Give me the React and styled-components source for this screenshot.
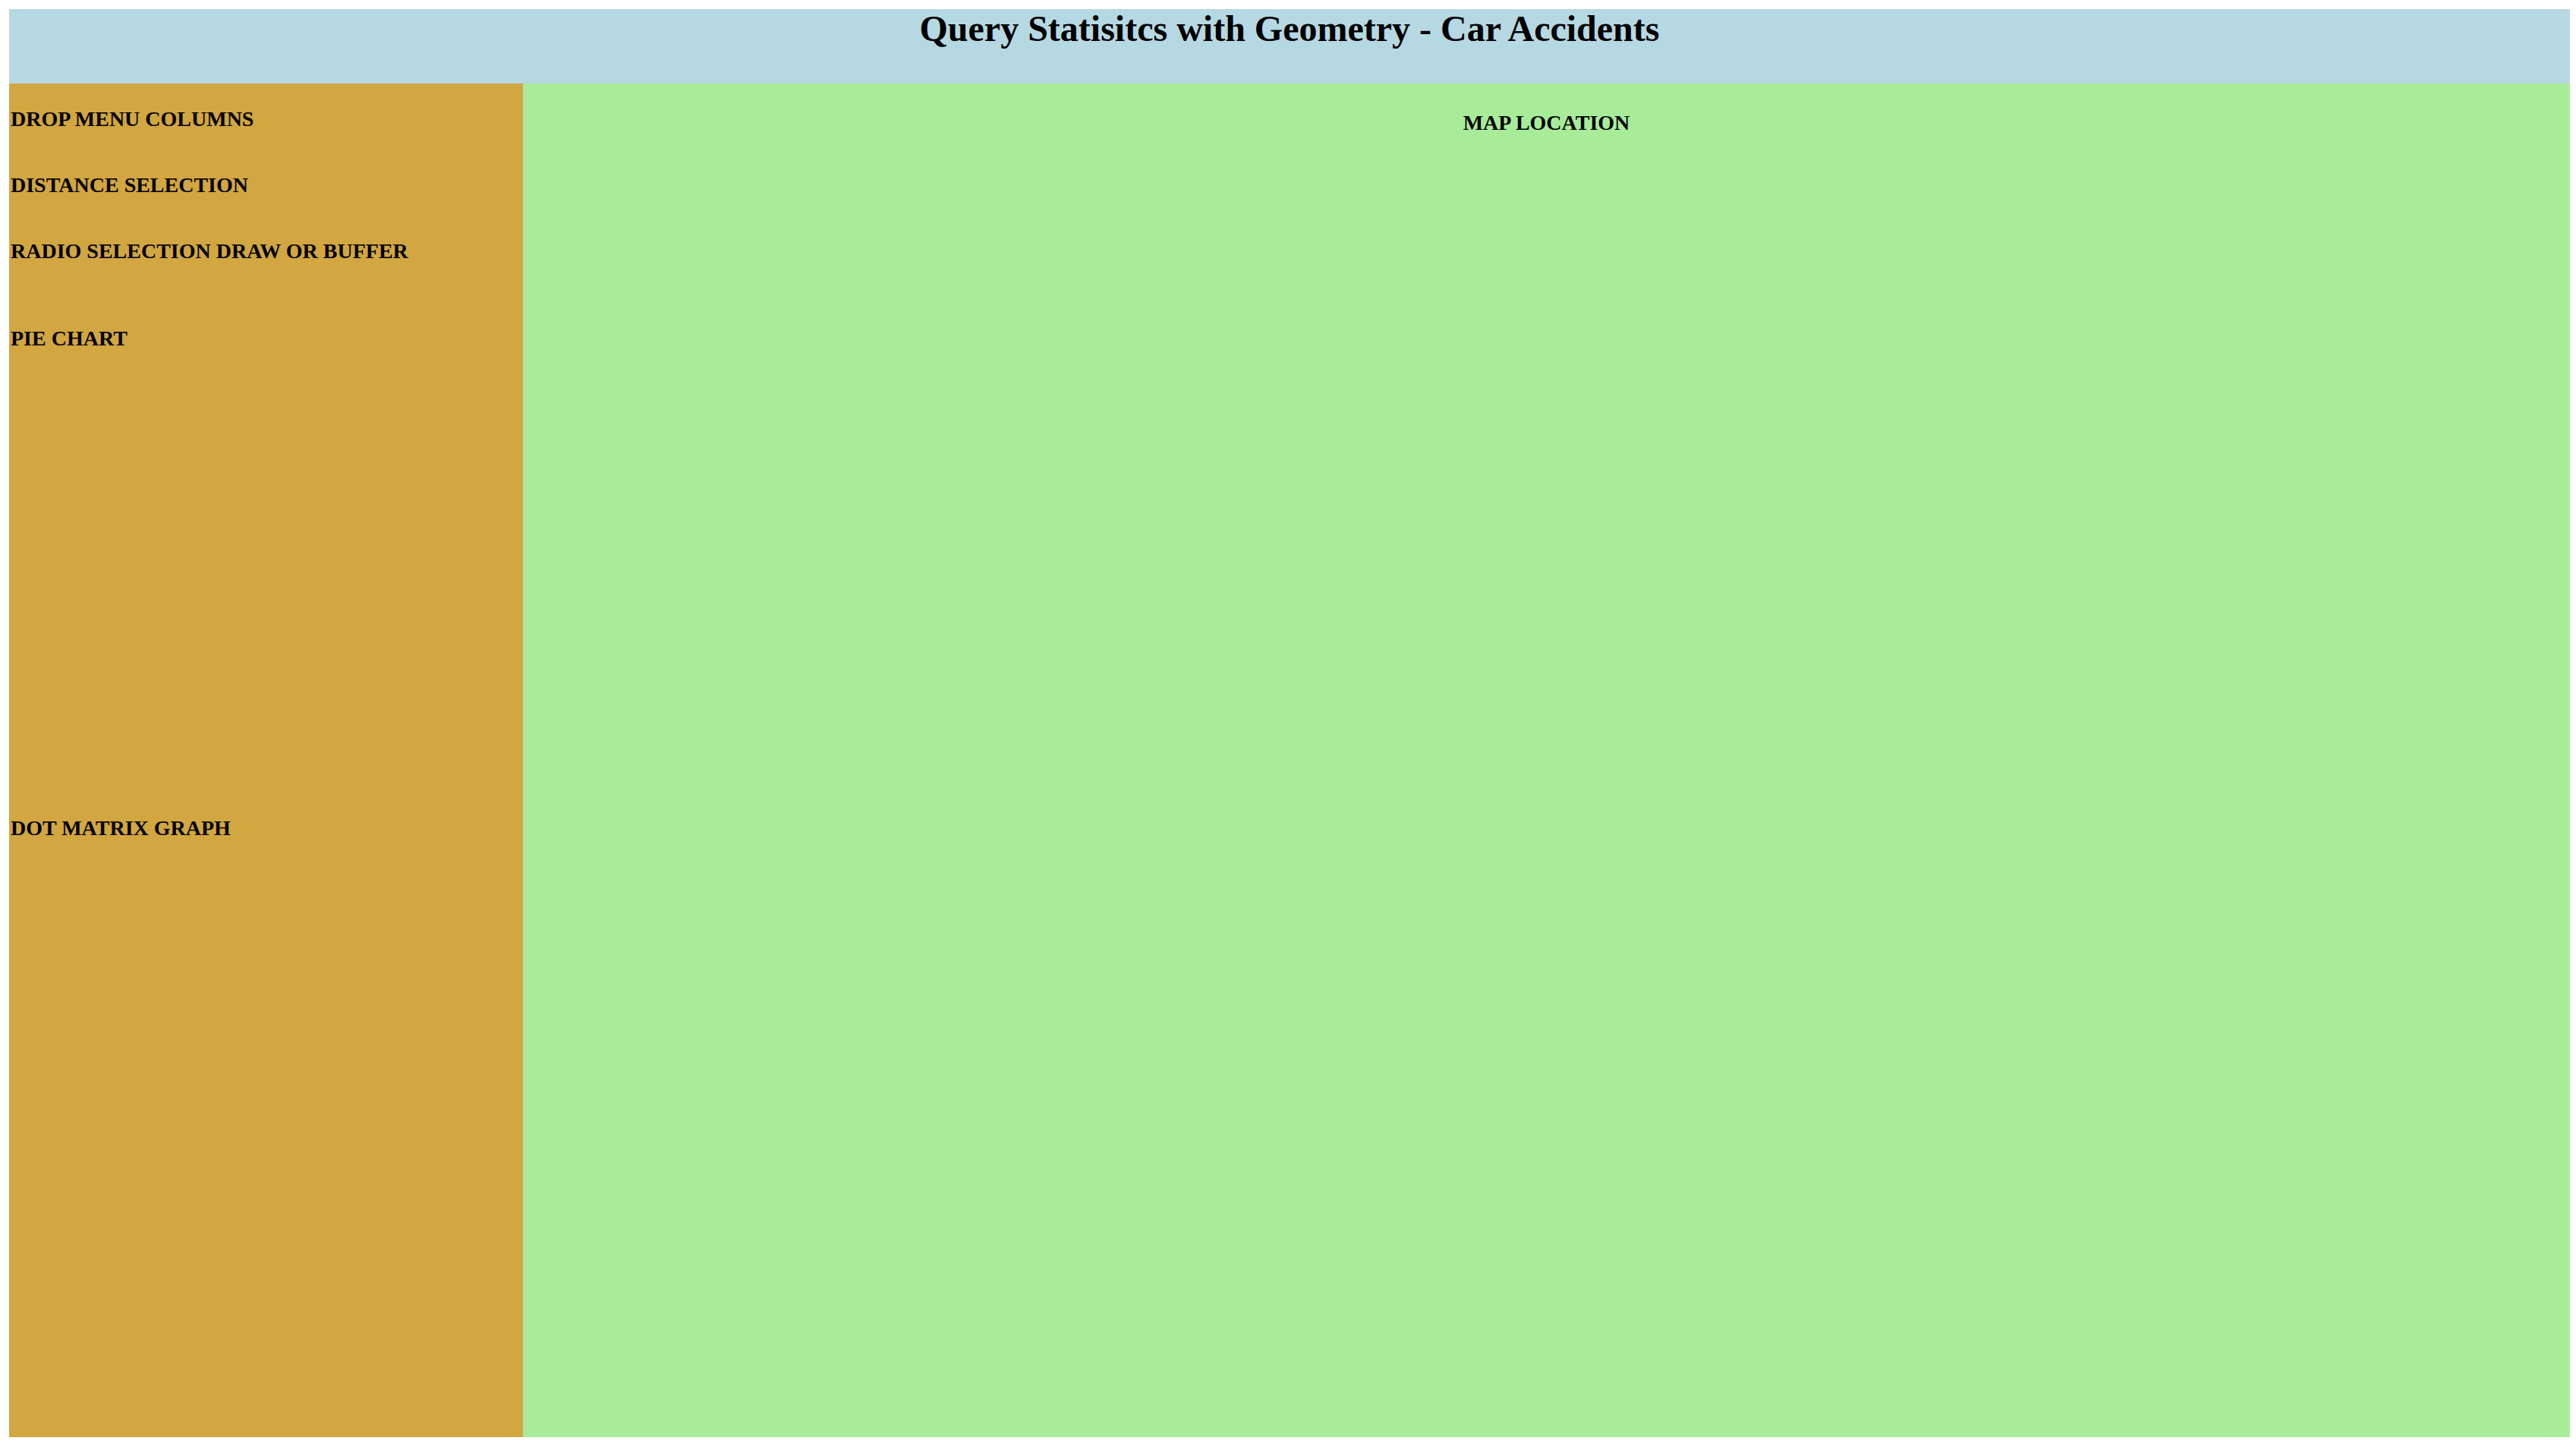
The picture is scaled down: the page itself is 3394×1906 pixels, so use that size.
import React from 'react';
import styled, { createGlobalStyle } from 'styled-components';

const GlobalStyle = createGlobalStyle`
  html, body {
    margin: 0;
    padding: 0;
    background: #ffffff;
  }
  body {
    font-family: "Liberation Serif", "Times New Roman", serif;
    color: #000;
  }
`

const Page = styled.div`
  box-sizing: border-box;
  height: 1906px;
  padding: 12px 8px 13px 12px;
  display: grid;
  grid-template-rows: 98px 1fr;
  grid-template-columns: 677px 1fr;
`

const Header = styled.header`
  grid-column: 1 / span 2;
  background: #b6d8e3;
  padding-top: 1px;
  text-align: center;
  h1 {
    margin: 0;
    font-size: 48px;
    line-height: 50px;
    font-weight: bold;
  }
`

const Sidebar = styled.aside`
  background: #d2a640;
  padding: 30px 0 0 2px;
  display: flex;
  flex-direction: column;
`

const Section = styled.div`
  height: ${p => p.height ? p.height + 'px' : 'auto'};
  flex: ${p => p.height ? '0 0 auto' : '1'};
`

const Label = styled.div`
  font-size: 28px;
  line-height: 33px;
  font-weight: bold;
`

const MapArea = styled.main`
  background: #a8ec9a;
  padding-top: 35px;
  text-align: center;
`

const sections = [
  { title: 'DROP MENU COLUMNS', height: 87 },
  { title: 'DISTANCE SELECTION', height: 87 },
  { title: 'RADIO SELECTION DRAW OR BUFFER', height: 115 },
  { title: 'PIE CHART', height: 645 },
  { title: 'DOT MATRIX GRAPH' },
]

export default function App() {
  return (
    <>
      <GlobalStyle />
      <Page>
        <Header>
          <h1>Query Statisitcs with Geometry - Car Accidents</h1>
        </Header>
        <Sidebar>
          {sections.map(s => (
            <Section key={s.title} height={s.height}>
              <Label>{s.title}</Label>
            </Section>
          ))}
        </Sidebar>
        <MapArea>
          <Label>MAP LOCATION</Label>
        </MapArea>
      </Page>
    </>
  )
}
